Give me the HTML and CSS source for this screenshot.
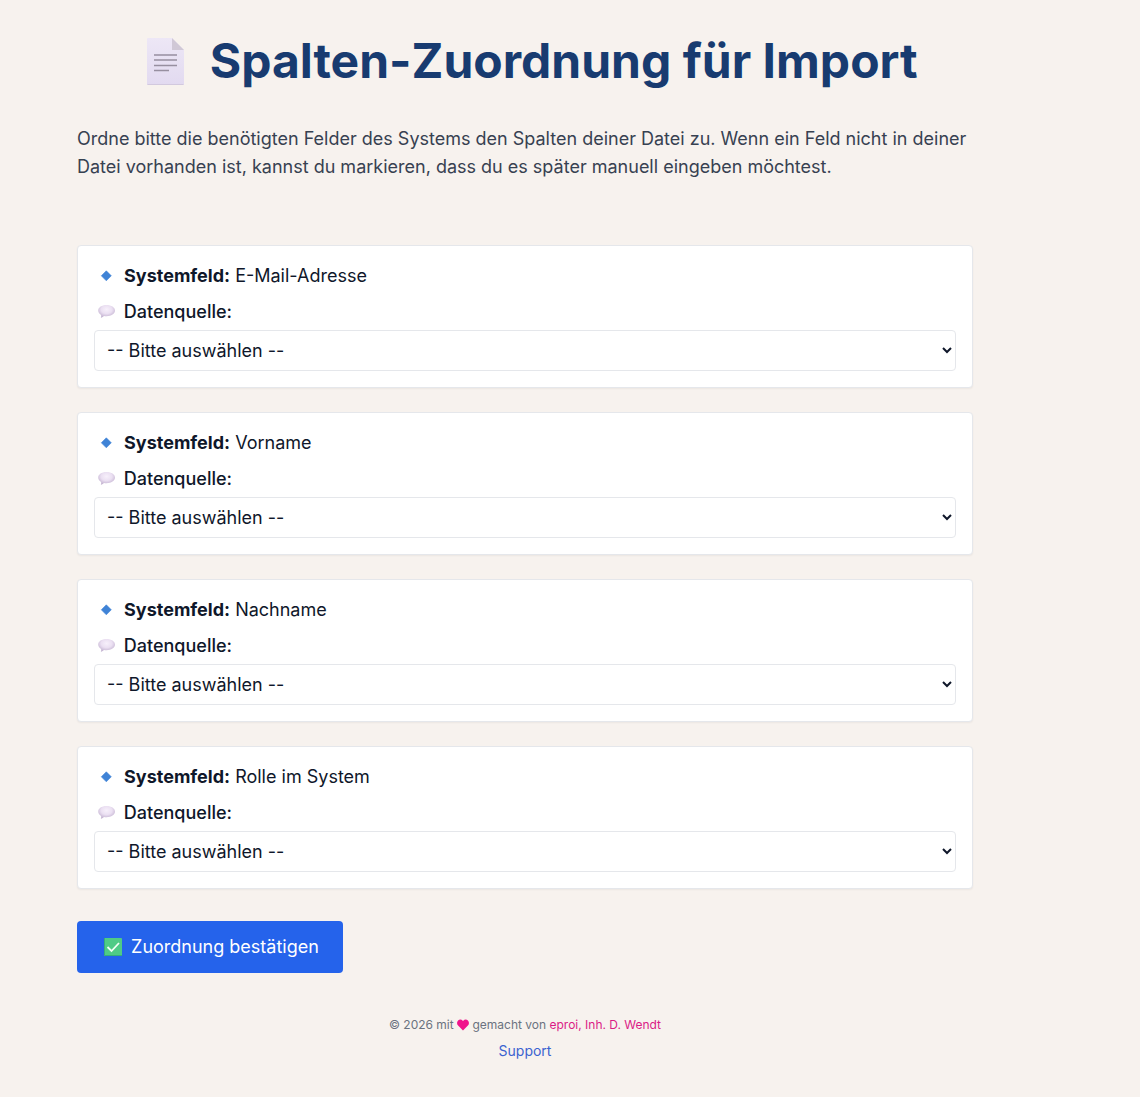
FILE: index.html
```
<!DOCTYPE html>
<html lang="de">
<head>
    <meta charset="UTF-8">
    <meta name="viewport" content="width=device-width, initial-scale=1.0">
    <title>Spalten-Zuordnung für Import</title>
    <link rel="stylesheet" href="styles.css">
</head>
<body>
    <!-- Symbole -->
    <svg class="sprite" aria-hidden="true">
        <defs>
            <linearGradient id="paper" x1="0" y1="0" x2="0" y2="1">
                <stop offset="0" stop-color="#ede7f6"/>
                <stop offset="1" stop-color="#e2daf0"/>
            </linearGradient>
            <radialGradient id="bubble" cx="0.5" cy="0.35" r="0.65">
                <stop offset="0" stop-color="#f7f0fb"/>
                <stop offset="0.5" stop-color="#ebe0f2"/>
                <stop offset="1" stop-color="#bfaecd"/>
            </radialGradient>
        </defs>
        <symbol id="icon-diamond" viewBox="0 0 25 20">
            <path d="M12.300 4.800l5 5-5 5-5-5z" fill="#3f83d6" stroke="#3f83d6" stroke-width="0.6" stroke-linejoin="round"/>
        </symbol>
        <symbol id="icon-bubble" viewBox="0 0 25 20">
            <path d="M12.500 3c4.700 0 8.500 2.400 8.500 5.600s-3.800 5.700-8.500 5.700c-.9 0-1.700-.1-2.500-.2-.7.900-1.800 1.500-3.200 1.700.5-.8.600-1.700.3-2.700C5.300 12 4.200 10.400 4.200 8.600 4.200 5.400 7.800 3 12.500 3z" fill="url(#bubble)"/>
        </symbol>
    </svg>

    <main class="container">
        <h1>
            <svg class="title-icon" viewBox="-3 0 66 54" aria-hidden="true">
                <path d="M13 3h24l12 12v34a1 1 0 0 1-1 1H13a1 1 0 0 1-1-1V4a1 1 0 0 1 1-1z" fill="url(#paper)"/>
                <path d="M12.500 49.500h36" stroke="#d2c9de"/>
                <path d="M37 3l12 12H37z" fill="#d0c8d6"/>
                <path d="M19 20h23M19 25h23M19 30.500h23M19 35.500h15" stroke="#978fa0" stroke-width="1.700"/>
            </svg>
            Spalten-Zuordnung für Import
        </h1>

        <p class="intro">Ordne bitte die benötigten Felder des Systems den Spalten deiner Datei zu. Wenn ein Feld nicht in deiner Datei vorhanden ist, kannst du markieren, dass du es später manuell eingeben möchtest.</p>

        <form>
            <div class="card">
                <p class="field-name"><svg class="icon" aria-hidden="true"><use href="#icon-diamond"/></svg> <strong>Systemfeld:</strong> E-Mail-Adresse</p>
                <label for="email"><svg class="icon" aria-hidden="true"><use href="#icon-bubble"/></svg> Datenquelle:</label>
                <select id="email" name="email">
                    <option value="">-- Bitte auswählen --</option>
                </select>
            </div>

            <div class="card">
                <p class="field-name"><svg class="icon" aria-hidden="true"><use href="#icon-diamond"/></svg> <strong>Systemfeld:</strong> Vorname</p>
                <label for="vorname"><svg class="icon" aria-hidden="true"><use href="#icon-bubble"/></svg> Datenquelle:</label>
                <select id="vorname" name="vorname">
                    <option value="">-- Bitte auswählen --</option>
                </select>
            </div>

            <div class="card">
                <p class="field-name"><svg class="icon" aria-hidden="true"><use href="#icon-diamond"/></svg> <strong>Systemfeld:</strong> Nachname</p>
                <label for="nachname"><svg class="icon" aria-hidden="true"><use href="#icon-bubble"/></svg> Datenquelle:</label>
                <select id="nachname" name="nachname">
                    <option value="">-- Bitte auswählen --</option>
                </select>
            </div>

            <div class="card">
                <p class="field-name"><svg class="icon" aria-hidden="true"><use href="#icon-diamond"/></svg> <strong>Systemfeld:</strong> Rolle im System</p>
                <label for="rolle"><svg class="icon" aria-hidden="true"><use href="#icon-bubble"/></svg> Datenquelle:</label>
                <select id="rolle" name="rolle">
                    <option value="">-- Bitte auswählen --</option>
                </select>
            </div>

            <button type="submit">
                <svg class="icon" viewBox="0 0 25 20" aria-hidden="true">
                    <rect x="3" y="1" width="18" height="18" rx="1" fill="#4fcb86"/>
                    <path d="M3.500 1v17.500H21" fill="none" stroke="#36ae7b"/>
                    <path d="M6.500 10l4 4 7.500-8" fill="none" stroke="#f2fff5" stroke-width="1.800"/>
                </svg>
                Zuordnung bestätigen
            </button>
        </form>
    </main>

    <footer>
        <p class="copyright">© 2026 mit <svg class="heart" viewBox="0 0 12 12" role="img" aria-label="Herz"><path d="M6 11.500L1.100 6.600C-.3 5.100-.3 2.800 1.100 1.500c1.300-1.300 3.400-1.200 4.600.2L6 2l.3-.3C7.500.3 9.600.2 10.900 1.500c1.400 1.300 1.400 3.600 0 5.100z" fill="#f0148c"/></svg> gemacht von <a href="#">eproi, Inh. D. Wendt</a></p>
        <a class="support" href="#">Support</a>
    </footer>
</body>
</html>
```
FILE: styles.css
```
* {
    box-sizing: border-box;
}
body {
    font-family: Inter, "Liberation Sans", sans-serif;
    font-size: 18px;
    line-height: 28px;
    margin: 0;
    padding: 32px 90px 32px 0;
    background-color: #f7f2ee;
    color: #0f172a;
}
.sprite {
    position: absolute;
    width: 0;
    height: 0;
}
.container {
    max-width: 896px;
    margin: 0 auto;
}
h1 {
    margin: 0 0 35px;
    font-size: 48px;
    line-height: 58px;
    font-weight: 700;
    text-align: center;
    color: #183b70;
}
.title-icon {
    width: 66px;
    height: 54px;
    vertical-align: -11px;
}
.intro {
    margin: 0 0 64px;
    color: #374151;
}
.card {
    margin-bottom: 24px;
    padding: 16px;
    background-color: #fff;
    border: 1px solid #e5e7eb;
    border-radius: 4px;
    box-shadow: 0 1px 2px rgba(0, 0, 0, 0.05);
}
.icon {
    width: 25px;
    height: 20px;
    vertical-align: -4px;
}
.field-name {
    margin: 0 0 8px;
}
strong {
    font-weight: 700;
}
label {
    display: block;
    margin-bottom: 4px;
    font-weight: 500;
}
select {
    display: block;
    width: 100%;
    height: 41px;
    padding: 8px;
    font: inherit;
    color: inherit;
    background-color: #fff;
    border: 1px solid #e5e7eb;
    border-radius: 4px;
}
button {
    display: block;
    margin-top: 32px;
    padding: 12px 24px;
    font: inherit;
    color: #fff;
    background-color: #2563eb;
    border: none;
    border-radius: 4px;
    cursor: pointer;
}
button:hover {
    background-color: #1d4ed8;
}
footer {
    margin-top: 40px;
    text-align: center;
}
.copyright {
    margin: 0 0 4px;
    font-size: 12px;
    line-height: 24px;
    color: #6b7280;
}
.copyright a {
    color: #db1a86;
    text-decoration: none;
}
.heart {
    width: 12px;
    height: 12px;
    vertical-align: -2px;
}
.support {
    display: block;
    font-size: 14px;
    line-height: 20px;
    color: #3b63d0;
    text-decoration: none;
}
```
